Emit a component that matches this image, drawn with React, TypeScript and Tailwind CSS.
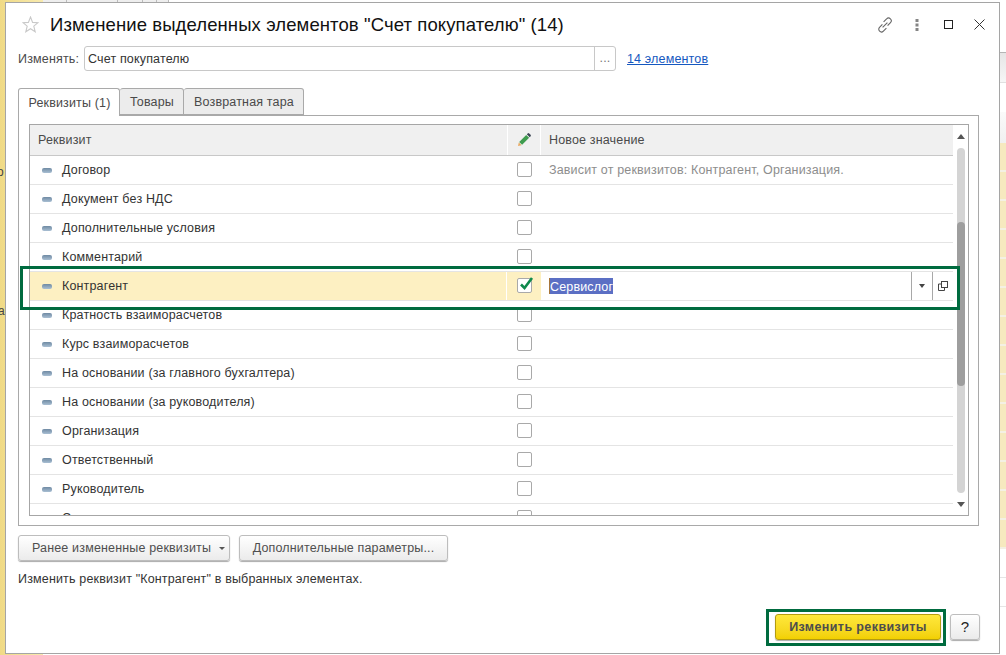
const rows = [
  'Договор',
  'Документ без НДС',
  'Дополнительные условия',
  'Комментарий',
  'Контрагент',
  'Кратность взаиморасчетов',
  'Курс взаиморасчетов',
  'На основании (за главного бухгалтера)',
  'На основании (за руководителя)',
  'Организация',
  'Ответственный',
  'Руководитель',
  'Склад',
]

function Dash() {
  return (
    <span className="w-[10px] h-[5px] rounded-[2px] bg-gradient-to-b from-[#6f8aa3] to-[#a9bfd3] shrink-0" />
  )
}

function Checkbox({ checked }: { checked?: boolean }) {
  return (
    <span className="relative block w-[15px] h-[15px] mb-px rounded-[2px] border border-[#a9a9a9] bg-white">
      {/* галка вылезает за рамку */}
      {checked && (
        <svg className="absolute -top-[4px] left-0 w-[17px] h-[17px]" viewBox="0 0 17 17" fill="none">
          <path d="M3 9.5 L6.5 13 L14 3" stroke="#0f8a4c" strokeWidth="2.6" />
        </svg>
      )}
    </span>
  )
}

function Background() {
  return (
    <div className="flex h-full">
      <aside className="w-[43px] h-full flex flex-col shrink-0 overflow-hidden bg-gradient-to-r from-[#f0da85] to-[#f8eaae] text-[12px] leading-[14px] text-[#444]">
        <span className="mt-[165px] -ml-[3px]">о</span>
        <span className="mt-[125px] -ml-[2px]">а</span>
      </aside>
      <div className="flex-1 flex flex-col bg-white">
        <div className="h-[53px] shrink-0 flex border-b border-[#b5b5b5]">
          <div className="h-[18px] w-[24px] border-r border-[#bbb] bg-[#eee]" />
          <div className="h-[18px] w-[51px] border-r border-[#bbb] bg-[#eee]" />
          <div className="h-[18px] w-[25px] border-r border-[#bbb] bg-[#eee]" />
          <div className="h-[18px] w-[14px] border-r border-[#bbb] bg-[#eee]" />
          <div className="h-[18px] w-[12px] border-r border-[#bbb] bg-[#eee]" />
          <div className="flex-1 h-[18px]" />
        </div>
        <div className="h-[30px] shrink-0 border-b border-[#e0e0e0] bg-gradient-to-b from-[#e6e6e6] to-[#f6f6f6]" />
        <div className="h-[29px] shrink-0" />
        <div className="h-[31px] shrink-0 bg-gradient-to-b from-[#fafafa] to-[#f0f0f0]" />
        {Array.from({ length: 14 }).map((_, i) => (
          <div key={i} className="h-[29px] shrink-0 bg-[#f6e9bf] border-b-2 border-[#f4f0e4]" />
        ))}
        <div className="h-[29px] shrink-0 border-b border-[#e5e5e5]" />
        <div className="h-[29px] shrink-0 border-b border-[#e5e5e5]" />
      </div>
    </div>
  )
}

function Header() {
  return (
    <div className="h-[43px] shrink-0 flex items-center pl-[16px] pr-[14px]">
      <svg className="w-[17px] h-[17px] shrink-0" viewBox="0 0 17 17" fill="none">
        <path d="M8.5 1 L10.6 6.4 L16 6.7 L11.8 10.2 L13.2 15.8 L8.5 12.7 L3.8 15.8 L5.2 10.2 L1 6.7 L6.4 6.4 Z" stroke="#c9c9c9" strokeWidth="1.1" />
      </svg>
      <h1 className="ml-[11px] text-[18.5px] tracking-[0.1px] text-[#111] whitespace-nowrap">
        Изменение выделенных элементов "Счет покупателю" (14)
      </h1>
      <div className="ml-auto flex items-center">
        <svg className="w-[16px] h-[16px]" viewBox="0 0 16 16" fill="none" stroke="#666" strokeWidth="1.1">
          <path d="M6.6 4.8 L9.6 1.9 a2.6 2.6 0 0 1 3.9 3.7 L10.6 8.6" />
          <path d="M9.4 11.2 L6.4 14.1 a2.6 2.6 0 0 1 -3.9 -3.7 L5.4 7.4" />
          <path d="M5.6 10.4 L10.4 5.6" />
        </svg>
        <svg className="ml-[22px] w-[4px] h-[12px]" viewBox="0 0 4 12" fill="#858585">
          <rect x="0.5" y="0" width="3" height="3" />
          <rect x="0.5" y="4.5" width="3" height="3" />
          <rect x="0.5" y="9" width="3" height="3" />
        </svg>
        <span className="ml-[25px] w-[9px] h-[9px] border border-[#222]" />
        <svg className="ml-[21px] w-[11px] h-[11px]" viewBox="0 0 11 11" stroke="#333" strokeWidth="1">
          <path d="M0.5 0.5 L10.5 10.5 M10.5 0.5 L0.5 10.5" />
        </svg>
      </div>
    </div>
  )
}

function Tabs() {
  return (
    <div className="flex h-[27px] shrink-0 text-[#4a4a4a]">
      <div className="w-[102px] -mb-px z-10 pt-px pl-px flex items-center justify-center bg-white border border-b-0 border-[#a9a9a9] rounded-t-[3px]">
        Реквизиты (1)
      </div>
      <div className="w-[64px] pt-px pl-px flex items-center justify-center bg-[#ececec] border border-l-0 border-[#a9a9a9] rounded-t-[3px]">
        Товары
      </div>
      <div className="w-[120px] pt-px pl-px flex items-center justify-center bg-[#ececec] border border-l-0 border-[#a9a9a9] rounded-t-[3px]">
        Возвратная тара
      </div>
    </div>
  )
}

function Row({ name, index }: { name: string; index: number }) {
  const active = name === 'Контрагент'
  return (
    <div className="h-[29px] shrink-0 flex border-b border-[#e4e4e4]">
      <div className={`w-[476px] flex items-center gap-[10px] pl-[12px] ${active ? 'bg-[#fdf0c2]' : ''}`}>
        <Dash />
        <span className="pt-px text-[#333]">{name}</span>
      </div>
      <div className={`w-[34px] ml-px flex items-center justify-center ${active ? 'bg-[#fdf0c2]' : ''}`}>
        <Checkbox checked={active} />
      </div>
      <div className="flex-1 flex items-center">
        {index === 0 && <span className="pl-[8px] pt-px text-[#8d8d8d]">Зависит от реквизитов: Контрагент, Организация.</span>}
        {active && (
          <div className="flex-1 flex items-center h-full">
            <span className="ml-[8px] h-[16px] leading-[18px] bg-[#5b6fc4] text-white border-l border-[#a8763a]">Сервислог</span>
            <span className="ml-auto w-[21px] h-full flex items-center justify-center border-l border-[#a8a8a8]">
              <span className="w-0 h-0 border-x-[3px] border-x-transparent border-t-[4px] border-t-[#444]" />
            </span>
            <span className="w-[21px] h-full flex items-center justify-center border-l border-[#a8a8a8]">
              <svg className="w-[10px] h-[10px]" viewBox="0 0 10 10" fill="none" stroke="#444" strokeWidth="1">
                <rect x="3.5" y="0.5" width="6" height="6" />
                <path d="M3.5 3 H0.5 V9.5 H6.5 V6.5" />
              </svg>
            </span>
          </div>
        )}
      </div>
    </div>
  )
}

function Scrollbar() {
  return (
    <div className="w-[15px] shrink-0 flex flex-col items-center pt-[9px] bg-white">
      <span className="shrink-0 w-0 h-0 border-x-[4px] border-x-transparent border-b-[5px] border-b-[#555]" />
      <div className="mt-[9px] h-[345px] w-[8px] shrink-0 rounded-[4px] bg-[#d4d4d4] overflow-hidden">
        <div className="mt-[74px] h-[164px] rounded-[4px] bg-[#9e9e9e]" />
      </div>
      <span className="mt-[9px] shrink-0 w-0 h-0 border-x-[4px] border-x-transparent border-t-[5px] border-t-[#555]" />
    </div>
  )
}

function Table() {
  return (
    <div className="h-[392px] flex border border-[#a6a6a6] overflow-hidden">
      <div className="flex-1 flex flex-col">
        <div className="h-[31px] shrink-0 flex border-b border-[#c8c8c8] text-[#4a4a4a]">
          <div className="w-[477px] bg-[#f0f0f0] flex items-center pl-[8px]">Реквизит</div>
          <div className="w-[32px] ml-px bg-[#f0f0f0] flex items-center justify-center">
            <svg className="w-[14px] h-[14px]" viewBox="0 0 14 14">
              <path d="M1 13 L1.8 9.4 L4.6 12.2 Z" fill="#e8a860" />
              <path d="M2.2 8.9 L9.2 1.9 L12.1 4.8 L5.1 11.8 Z" fill="#3f9c4f" />
              <path d="M9.8 1.3 L10.7 0.4 a1.2 1.2 0 0 1 1.5 0 L13.6 1.8 a1.2 1.2 0 0 1 0 1.5 L12.7 4.2 Z" fill="#3c4654" />
            </svg>
          </div>
          <div className="flex-1 ml-px bg-[#f0f0f0] flex items-center pl-[8px]">Новое значение</div>
        </div>
        {rows.map((name, i) => (
          <Row key={name} name={name} index={i} />
        ))}
      </div>
      <Scrollbar />
    </div>
  )
}

export default function App() {
  return (
    <div className="relative w-[1006px] h-[655px] overflow-hidden font-['Liberation_Sans',Arial,sans-serif] text-[12.5px] tracking-[0.16px]">
      <Background />

      <div className="absolute left-[5px] top-[2px] w-[995px] h-[652px] flex flex-col bg-white border border-[#a5a5a5]">
        <Header />

        <div className="h-[25px] shrink-0 flex items-center pl-[12px] text-[#4a4a4a]">
          <span className="w-[66px] pt-px">Изменять:</span>
          <div className="w-[532px] h-full flex items-center rounded-[3px] border border-[#c8c8c8]">
            <span className="flex-1 pl-[3px] pt-px text-[#333]">Счет покупателю</span>
            <span className="w-[21px] h-full flex items-center justify-center border-l border-[#c8c8c8] text-[#777]">...</span>
          </div>
          <a className="ml-[11px] pt-px text-[#1558c0] underline">14 элементов</a>
        </div>

        <div className="mt-[17px] pl-[12px] pr-[20px] flex flex-col">
          <Tabs />
          <div className="relative h-[411px] border border-[#a9a9a9] pt-[8px] pl-[10px] pr-[9px]">
            <Table />
            {/* рамка-выделение строки поверх таблицы */}
            <span className="absolute left-[1px] top-[150px] w-[940px] h-[44px] z-10 border-[3px] border-[#006b3f] pointer-events-none" />
          </div>
        </div>

        <div className="mt-[9px] pl-[12px] flex gap-[9px] text-[#4f4f4f]">
          <button className="w-[212px] h-[26px] pl-[13px] flex items-center gap-[8px] rounded-[3px] border border-[#bdbdbd] shadow-[0_1px_1px_#aaa] bg-gradient-to-b from-white to-[#ebebeb]">
            Ранее измененные реквизиты
            <span className="w-0 h-0 mt-px border-x-[3px] border-x-transparent border-t-[3px] border-t-[#555]" />
          </button>
          <button className="w-[209px] h-[26px] flex items-center justify-center rounded-[3px] border border-[#bdbdbd] shadow-[0_1px_1px_#aaa] bg-gradient-to-b from-white to-[#ebebeb]">
            Дополнительные параметры...
          </button>
        </div>

        <p className="mt-[11px] pl-[12px] leading-[14px] text-[#333]">Изменить реквизит "Контрагент" в выбранных элементах.</p>

        <div className="mt-auto pb-[13px] pr-[19px] flex justify-end gap-[9px]">
          <div className="relative">
            <button className="w-[166px] h-[26px] rounded-[3px] border border-[#b39b10] shadow-[0_1px_1px_#aaa] bg-gradient-to-b from-[#ffe83a] to-[#f2d000] font-bold tracking-[0.4px] text-[#4d4d4d]">
              Изменить реквизиты
            </button>
            <span className="absolute -left-[9px] -right-[5px] -top-[5px] -bottom-[6px] border-[3px] border-[#006b3f] pointer-events-none" />
          </div>
          <button className="w-[30px] h-[26px] rounded-[3px] border border-[#bdbdbd] shadow-[0_1px_1px_#aaa] bg-gradient-to-b from-white to-[#ebebeb] text-[15px] text-[#222]">
            ?
          </button>
        </div>
      </div>
    </div>
  )
}
